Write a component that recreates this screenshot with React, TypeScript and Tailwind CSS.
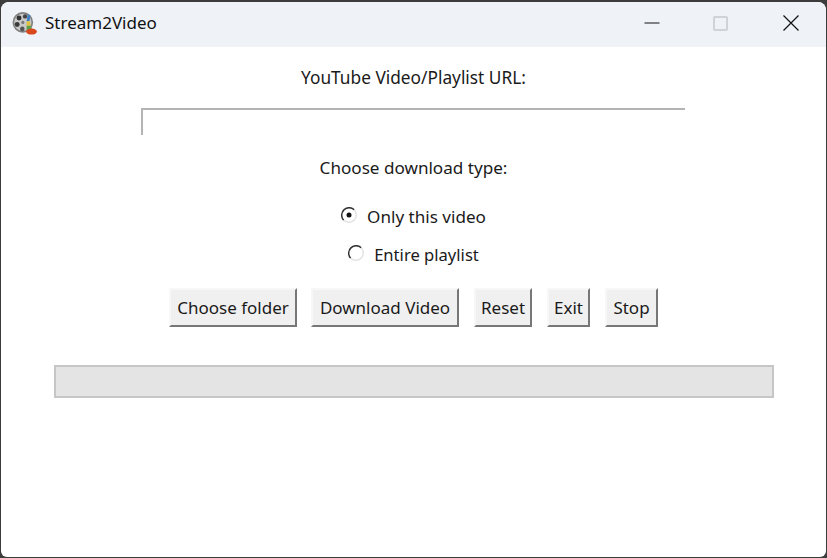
const FONT = 'font-["Noto_Sans","Open_Sans",sans-serif]'

function AppIcon() {
  return (
    <svg width="26" height="26" viewBox="0 0 24 24" className="mt-[1px] ml-[-1px] shrink-0">
      <circle cx="10" cy="10.5" r="9.5" fill="#7f7f7f" />
      <circle cx="10" cy="10.5" r="8" fill="#c9c9c9" />
      <circle cx="6.5" cy="6.5" r="2.3" fill="#333" />
      <circle cx="12" cy="5" r="2" fill="#444" />
      <circle cx="4.8" cy="12.5" r="2.3" fill="#3a3a3a" />
      <circle cx="9.5" cy="16.5" r="2.1" fill="#555" />
      <circle cx="10" cy="10.5" r="1.4" fill="#777" />
      <path d="M14.5 3l2.5 1.2-.8 5.3h-2.7z" fill="#3f7fc4" />
      <path d="M13.5 9.5h3l.8 4h-3.8z" fill="#e0c23c" />
      <path d="M13.5 13.5h4l1 4h-5z" fill="#5ea04a" />
      <ellipse cx="18" cy="19" rx="5" ry="2.8" fill="#d9481c" />
    </svg>
  )
}

function WindowButtons() {
  return (
    <div className="flex items-center">
      <svg width="16" height="16" viewBox="0 0 16 16" className="mr-[53px]">
        <path d="M0.5 8h15" stroke="#111" strokeWidth="1" />
      </svg>
      <div className="mr-[55px] h-[15px] w-[15px] rounded-[2px] border-2 border-[#cfd2d6]" />
      <svg width="16" height="16" viewBox="0 0 16 16" className="mr-[27px]">
        <path d="M0.5 0.5l15 15M15.5 0.5l-15 15" stroke="#111" strokeWidth="1.2" />
      </svg>
    </div>
  )
}

function Radio({ checked, label, size }: { checked?: boolean; label: string; size: string }) {
  return (
    <label className={`flex h-[26px] items-center gap-[10px] text-[#1a1a1a] ${size}`}>
      <svg width="16" height="16" viewBox="0 0 16 16" className="mb-[4px] shrink-0">
        <circle cx="8" cy="8" r="7.5" fill="#fff" />
        <path d="M2.7 13.3A7.5 7.5 0 0 1 13.3 2.7" fill="none" stroke="#333" strokeWidth="1.5" />
        <path d="M13.3 2.7A7.5 7.5 0 0 1 2.7 13.3" fill="none" stroke="#e4e4e4" strokeWidth="1.5" />
        {checked && <circle cx="8" cy="8" r="2.5" fill="#111" />}
      </svg>
      {label}
    </label>
  )
}

function Btn({ label, width }: { label: string; width: string }) {
  return (
    <button
      className={`flex h-[39px] items-center justify-center border-2 border-t-[#f7f7f7] border-l-[#f7f7f7] border-r-[#777] border-b-[#777] bg-[#f0f0f0] text-[17px] text-[#1a1a1a] ${width}`}
    >
      {label}
    </button>
  )
}

export default function App() {
  return (
    <div className={`h-[558px] w-[827px] overflow-hidden bg-[#3c3c3c] pt-[2px] pr-[1px] pb-[1px] pl-[1px] ${FONT}`}>
      <div className="flex h-full flex-col overflow-hidden rounded-t-[8px] rounded-b-[6px] bg-white">
        <div className="flex h-[45px] shrink-0 items-center justify-between bg-[#eff3f8] pb-[3px] pl-[12px]">
          <div className="flex items-center gap-[7px] text-[17px] text-[#111]">
            <AppIcon />
            <span>Stream2Video</span>
          </div>
          <WindowButtons />
        </div>

        <div className="flex flex-col items-center pt-[19px] text-[17.3px] text-[#1a1a1a]">
          <div className="h-[24px] leading-[24px]">YouTube Video/Playlist URL:</div>
          <input className="mt-[18px] mr-[1px] h-[27px] w-[544px] border-t-2 border-l-2 border-[#b4b4b4] bg-white outline-none" />
          <div className="mt-[21px] h-[24px] text-[17.1px] leading-[24px]">Choose download type:</div>
          <div className="mt-[24px] flex flex-col items-center gap-[12px]">
            <Radio checked label="Only this video" size="text-[17.1px]" />
            <Radio label="Entire playlist" size="text-[16.6px]" />
          </div>
          <div className="mt-[20px] flex">
            <Btn label="Choose folder" width="w-[128px]" />
            <Btn label="Download Video" width="ml-[14px] w-[148px]" />
            <Btn label="Reset" width="ml-[15px] w-[58px]" />
            <Btn label="Exit" width="ml-[15px] w-[43px]" />
            <Btn label="Stop" width="ml-[15px] w-[53px]" />
          </div>
          <div className="mt-[38px] h-[33px] w-[720px] border-2 border-[#c6c6c6] bg-[#e4e4e4]" />
        </div>
      </div>
    </div>
  )
}
